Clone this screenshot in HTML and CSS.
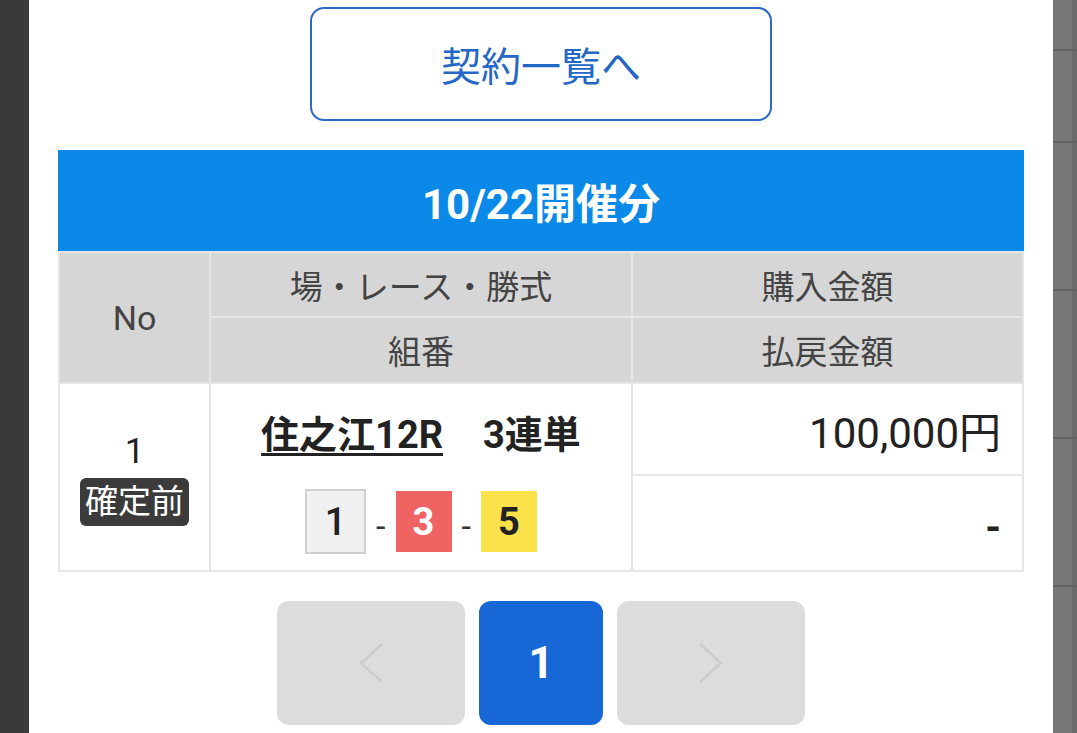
FILE: index.html
```html
<!DOCTYPE html>
<html lang="ja">
<head>
<meta charset="utf-8">
<title>契約一覧</title>
<link rel="stylesheet" href="styles.css">
</head>
<body>
<div class="screen">
  <div class="side-left"></div>
  <main class="panel">
    <div class="top-action">
      <a class="list-btn" href="#">契約一覧へ</a>
    </div>
    <section class="card">
      <h2 class="card-title">10/22開催分</h2>
      <table class="bets">
        <colgroup>
          <col class="c-no">
          <col class="c-race">
          <col class="c-amt">
        </colgroup>
        <tr class="h-row1">
          <th rowspan="2" class="th-no">No</th>
          <th>場・レース・勝式</th>
          <th>購入金額</th>
        </tr>
        <tr class="h-row2">
          <th>組番</th>
          <th>払戻金額</th>
        </tr>
        <tr class="b-row1">
          <td rowspan="2" class="td-no">
            <div class="no-wrap">
              <span class="no-num">1</span>
              <span class="badge">確定前</span>
            </div>
          </td>
          <td class="td-race"><a class="race-link" href="#">住之江12R</a><span class="race-type">3連単</span></td>
          <td class="td-amt">100,000円</td>
        </tr>
        <tr class="b-row2">
          <td class="td-combo">
            <div class="combo">
              <span class="boat boat-1">1</span>
              <span class="sep">-</span>
              <span class="boat boat-3">3</span>
              <span class="sep">-</span>
              <span class="boat boat-5">5</span>
            </div>
          </td>
          <td class="td-pay">-</td>
        </tr>
      </table>
    </section>
    <nav class="pager">
      <a class="pg pg-arrow" href="#" aria-label="前へ">
        <svg width="26" height="40" viewBox="0 0 26 40"><polyline points="24,1 3,20 24,39" fill="none" stroke="#cdcdcd" stroke-width="2.4"/></svg>
      </a>
      <a class="pg pg-current" href="#">1</a>
      <a class="pg pg-arrow" href="#" aria-label="次へ">
        <svg width="26" height="40" viewBox="0 0 26 40"><polyline points="2,1 23,20 2,39" fill="none" stroke="#cdcdcd" stroke-width="2.4"/></svg>
      </a>
    </nav>
  </main>
  <div class="side-right">
    <div class="bg-seg seg-a"></div>
    <div class="bg-seg seg-b"></div>
    <div class="bg-seg seg-c"></div>
    <div class="bg-seg seg-c"></div>
    <div class="bg-seg seg-c"></div>
  </div>
</div>
</body>
</html>
```

FILE: styles.css
```css
* {
  box-sizing: border-box;
}

html, body {
  margin: 0;
  padding: 0;
  height: 100%;
  overflow: hidden;
}

body {
  font-family: Roboto, "Noto Sans CJK JP", sans-serif;
  background: #ffffff;
  color: #222222;
}

.screen {
  display: flex;
  height: 733px;
}

.side-left {
  width: 29px;
  flex: 0 0 29px;
  background: #3a3a3a;
}

.side-right {
  width: 24px;
  flex: 0 0 24px;
  background: #777777;
  box-shadow: inset -5px 0 0 #6a6a6a;
  display: flex;
  flex-direction: column;
}

.bg-seg {
  border-bottom: 2px solid #636363;
  flex: 0 0 auto;
}

.seg-a { height: 51px; }
.seg-b { height: 92px; }
.seg-c { height: 148px; }

.panel {
  flex: 1 1 auto;
  background: #ffffff;
  padding: 7px 29px 0;
  display: flex;
  flex-direction: column;
  align-items: center;
}

.top-action {
  display: flex;
  justify-content: center;
}

.list-btn {
  width: 462px;
  height: 114px;
  border: 2px solid #2d69c2;
  border-radius: 14px;
  display: flex;
  align-items: center;
  justify-content: center;
  font-size: 40px;
  color: #2467c4;
  text-decoration: none;
  letter-spacing: 0;
}

.card {
  margin-top: 29px;
  width: 966px;
}

.card-title {
  margin: 0;
  height: 101px;
  background: #0a89e8;
  color: #ffffff;
  font-size: 42px;
  font-weight: 700;
  display: flex;
  align-items: center;
  justify-content: center;
}

.bets {
  width: 966px;
  table-layout: fixed;
  border-collapse: separate;
  border-spacing: 0;
  border-top: 2px solid #e5e5e5;
  border-left: 2px solid #e5e5e5;
}

.c-no { width: 151px; }
.c-race { width: 422px; }
.c-amt { width: 391px; }

.bets th,
.bets td {
  border-right: 2px solid #e5e5e5;
  border-bottom: 2px solid #e5e5e5;
  padding: 0;
  vertical-align: middle;
}

.bets th {
  background: #d6d6d6;
  color: #444444;
  font-weight: 400;
  font-size: 33px;
  text-align: center;
}

.bets .th-no {
  font-size: 34px;
}

.h-row1 { height: 65px; }
.h-row2 { height: 66px; }
.b-row1 { height: 92px; }
.b-row2 { height: 96px; }

.td-no {
  text-align: center;
}

.no-wrap {
  display: flex;
  flex-direction: column;
  align-items: center;
  padding-top: 4px;
}

.no-num {
  font-size: 35px;
  line-height: 40px;
  color: #222222;
}

.badge {
  margin-top: 6px;
  background: #3b3b3b;
  color: #ffffff;
  font-size: 33px;
  line-height: 48px;
  height: 48px;
  padding: 0 5px;
  border-radius: 6px;
}

.td-race {
  text-align: center;
  font-size: 38px;
  font-weight: 700;
  border-bottom-width: 0 !important;
  padding-top: 2px !important;
}

.race-link {
  color: #222222;
  text-decoration: underline;
  text-decoration-thickness: 3px;
  text-underline-offset: 5px;
}

.race-type {
  margin-left: 40px;
}

.td-combo {
  text-align: center;
}

.combo {
  display: flex;
  justify-content: center;
  align-items: center;
  gap: 10px;
  margin-top: -3px;
}

.boat {
  width: 56px;
  height: 61px;
  display: flex;
  align-items: center;
  justify-content: center;
  font-size: 38px;
  font-weight: 700;
}

.boat-1 {
  width: 61px;
  height: 65px;
  background: #f0f0f0;
  border: 2px solid #d0d0d0;
  color: #222222;
  font-weight: 500;
}

.boat-3 {
  background: #f06363;
  color: #ffffff;
}

.boat-5 {
  background: #fbe24b;
  color: #222222;
}

.sep {
  font-size: 34px;
  color: #333333;
  margin-top: 8px;
}

.td-amt {
  text-align: right;
  padding-right: 21px !important;
  font-size: 42px;
  color: #222222;
}

.td-pay {
  text-align: right;
  padding-right: 21px !important;
  font-size: 40px;
  font-weight: 700;
  color: #222222;
  padding-top: 8px !important;
}

.pager {
  margin-top: 29px;
  display: flex;
  gap: 14px;
  justify-content: center;
}

.pg {
  height: 124px;
  border-radius: 12px;
  display: flex;
  align-items: center;
  justify-content: center;
  text-decoration: none;
}

.pg-arrow {
  width: 188px;
  background: #dcdcdc;
}

.pg-current {
  width: 124px;
  background: #1767d6;
  color: #ffffff;
  font-size: 44px;
  font-weight: 700;
}
```
